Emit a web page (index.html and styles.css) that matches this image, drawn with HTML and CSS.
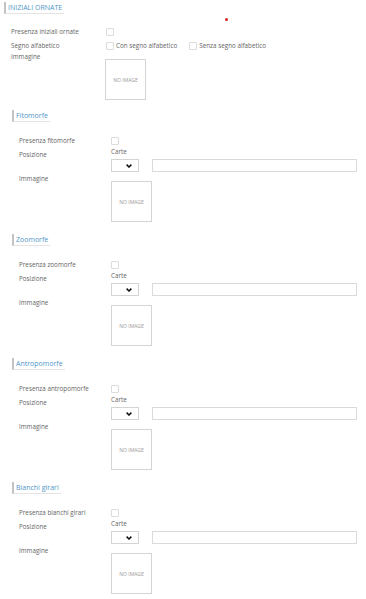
FILE: index.html
```html
<!DOCTYPE html>
<html lang="it">
<head>
    <meta charset="UTF-8">
    <title>Decorazioni</title>
    <link rel="stylesheet" href="styles.css">
</head>
<body>
    <div class="section main">
        <div class="head"><span>INIZIALI ORNATE</span></div>
        <span class="dot"></span>
        <div class="row r-check">
            <div class="label">Presenza iniziali ornate</div>
            <div class="ctrl"><span class="box-check"></span></div>
        </div>
        <div class="row r-segno">
            <div class="label">Segno alfabetico</div>
            <div class="ctrl choices">
                <span class="opt"><span class="box-check"></span>Con segno alfabetico</span>
                <span class="opt"><span class="box-check"></span>Senza segno alfabetico</span>
            </div>
        </div>
        <div class="row r-img">
            <div class="label">Immagine</div>
            <div class="ctrl"><div class="noimg">NO IMAGE</div></div>
        </div>
    </div>

    <div class="section sub">
        <div class="head"><span>Fitomorfe</span></div>
        <div class="row r-check">
            <div class="label">Presenza fitomorfe</div>
            <div class="ctrl"><span class="box-check"></span></div>
        </div>
        <div class="row r-pos">
            <div class="label">Posizione</div>
            <div class="ctrl">
                <div class="small">Carte</div>
                <div class="inputs">
                    <span class="select"><svg width="6" height="4" viewBox="0 0 6 4"><polyline points="0.6,0.6 3,3 5.4,0.6" fill="none" stroke="#111" stroke-width="1.5"/></svg></span>
                    <span class="text"></span>
                </div>
            </div>
        </div>
        <div class="row r-img">
            <div class="label">Immagine</div>
            <div class="ctrl"><div class="noimg">NO IMAGE</div></div>
        </div>
    </div>

    <div class="section sub">
        <div class="head"><span>Zoomorfe</span></div>
        <div class="row r-check">
            <div class="label">Presenza zoomorfe</div>
            <div class="ctrl"><span class="box-check"></span></div>
        </div>
        <div class="row r-pos">
            <div class="label">Posizione</div>
            <div class="ctrl">
                <div class="small">Carte</div>
                <div class="inputs">
                    <span class="select"><svg width="6" height="4" viewBox="0 0 6 4"><polyline points="0.6,0.6 3,3 5.4,0.6" fill="none" stroke="#111" stroke-width="1.5"/></svg></span>
                    <span class="text"></span>
                </div>
            </div>
        </div>
        <div class="row r-img">
            <div class="label">Immagine</div>
            <div class="ctrl"><div class="noimg">NO IMAGE</div></div>
        </div>
    </div>

    <div class="section sub">
        <div class="head"><span>Antropomorfe</span></div>
        <div class="row r-check">
            <div class="label">Presenza antropomorfe</div>
            <div class="ctrl"><span class="box-check"></span></div>
        </div>
        <div class="row r-pos">
            <div class="label">Posizione</div>
            <div class="ctrl">
                <div class="small">Carte</div>
                <div class="inputs">
                    <span class="select"><svg width="6" height="4" viewBox="0 0 6 4"><polyline points="0.6,0.6 3,3 5.4,0.6" fill="none" stroke="#111" stroke-width="1.5"/></svg></span>
                    <span class="text"></span>
                </div>
            </div>
        </div>
        <div class="row r-img">
            <div class="label">Immagine</div>
            <div class="ctrl"><div class="noimg">NO IMAGE</div></div>
        </div>
    </div>

    <div class="section sub">
        <div class="head"><span>Bianchi girari</span></div>
        <div class="row r-check">
            <div class="label">Presenza bianchi girari</div>
            <div class="ctrl"><span class="box-check"></span></div>
        </div>
        <div class="row r-pos">
            <div class="label">Posizione</div>
            <div class="ctrl">
                <div class="small">Carte</div>
                <div class="inputs">
                    <span class="select"><svg width="6" height="4" viewBox="0 0 6 4"><polyline points="0.6,0.6 3,3 5.4,0.6" fill="none" stroke="#111" stroke-width="1.5"/></svg></span>
                    <span class="text"></span>
                </div>
            </div>
        </div>
        <div class="row r-img">
            <div class="label">Immagine</div>
            <div class="ctrl"><div class="noimg">NO IMAGE</div></div>
        </div>
    </div>
</body>
</html>
```

FILE: styles.css
```css
body {
    margin: 0;
    padding-top: 2px;
    font-family: "Open Sans", "Liberation Sans", sans-serif;
    font-size: 6.3px;
    color: #666;
    background: #fff;
}
.section {
    position: relative;
}
.head {
    display: flex;
}
.head span {
    display: block;
    height: 11px;
    line-height: 11px;
    padding: 0 2px 0 2px;
    border-left: 2px solid #c4c4c4;
    border-bottom: 1px solid #e4e4e4;
    color: #4f96c8;
    font-size: 7px;
}
.dot {
    position: absolute;
    left: 225px;
    top: 16px;
    width: 3px;
    height: 3px;
    border-radius: 50%;
    background: #d42020;
}
.row {
    display: flex;
}
.label {
    line-height: 8px;
    flex: none;
}
.ctrl {
    line-height: 8px;
}
.box-check {
    display: inline-block;
    box-sizing: border-box;
    width: 8px;
    height: 8px;
    border: 1px solid #dcdcdc;
    border-radius: 1px;
    background: #fff;
    vertical-align: top;
}
.choices {
    display: flex;
}
.opt {
    display: flex;
    gap: 2px;
}
.opt + .opt {
    margin-left: 12px;
}
.noimg {
    box-sizing: border-box;
    width: 41px;
    height: 41px;
    border: 1px solid #d4d4d4;
    display: flex;
    align-items: center;
    justify-content: center;
    font-size: 5px;
    color: #999;
}

/* prima sezione */
.main {
    padding-left: 4px;
    height: 108px;
}
.main .label {
    width: 95px;
    padding-left: 7px;
}
.main .r-check {
    margin-top: 14px;
}
.main .r-segno {
    margin-top: 6px;
}
.main .r-img {
    margin-top: 3px;
}
.main .r-img .noimg {
    margin-top: 6px;
    margin-left: -1px;
}

/* sottosezioni */
.sub {
    padding-left: 12px;
    height: 124px;
}
.sub .label {
    width: 92px;
    padding-left: 7px;
}
.sub .r-check {
    margin-top: 15px;
}
.sub .r-pos {
    margin-top: 3px;
}
.sub .r-pos .label {
    padding-top: 3px;
}
.small {
    line-height: 8px;
}
.inputs {
    display: flex;
    gap: 13px;
    margin-top: 3px;
}
.select {
    box-sizing: border-box;
    width: 28px;
    height: 13px;
    border: 1px solid #d4d4d4;
    display: flex;
    align-items: center;
    justify-content: flex-end;
    padding-right: 6px;
}
.select svg {
    display: block;
}
.text {
    box-sizing: border-box;
    width: 205px;
    height: 13px;
    border: 1px solid #dadada;
}
.sub .r-img {
    margin-top: 3px;
}
.sub .r-img .noimg {
    margin-top: 6px;
}
```
